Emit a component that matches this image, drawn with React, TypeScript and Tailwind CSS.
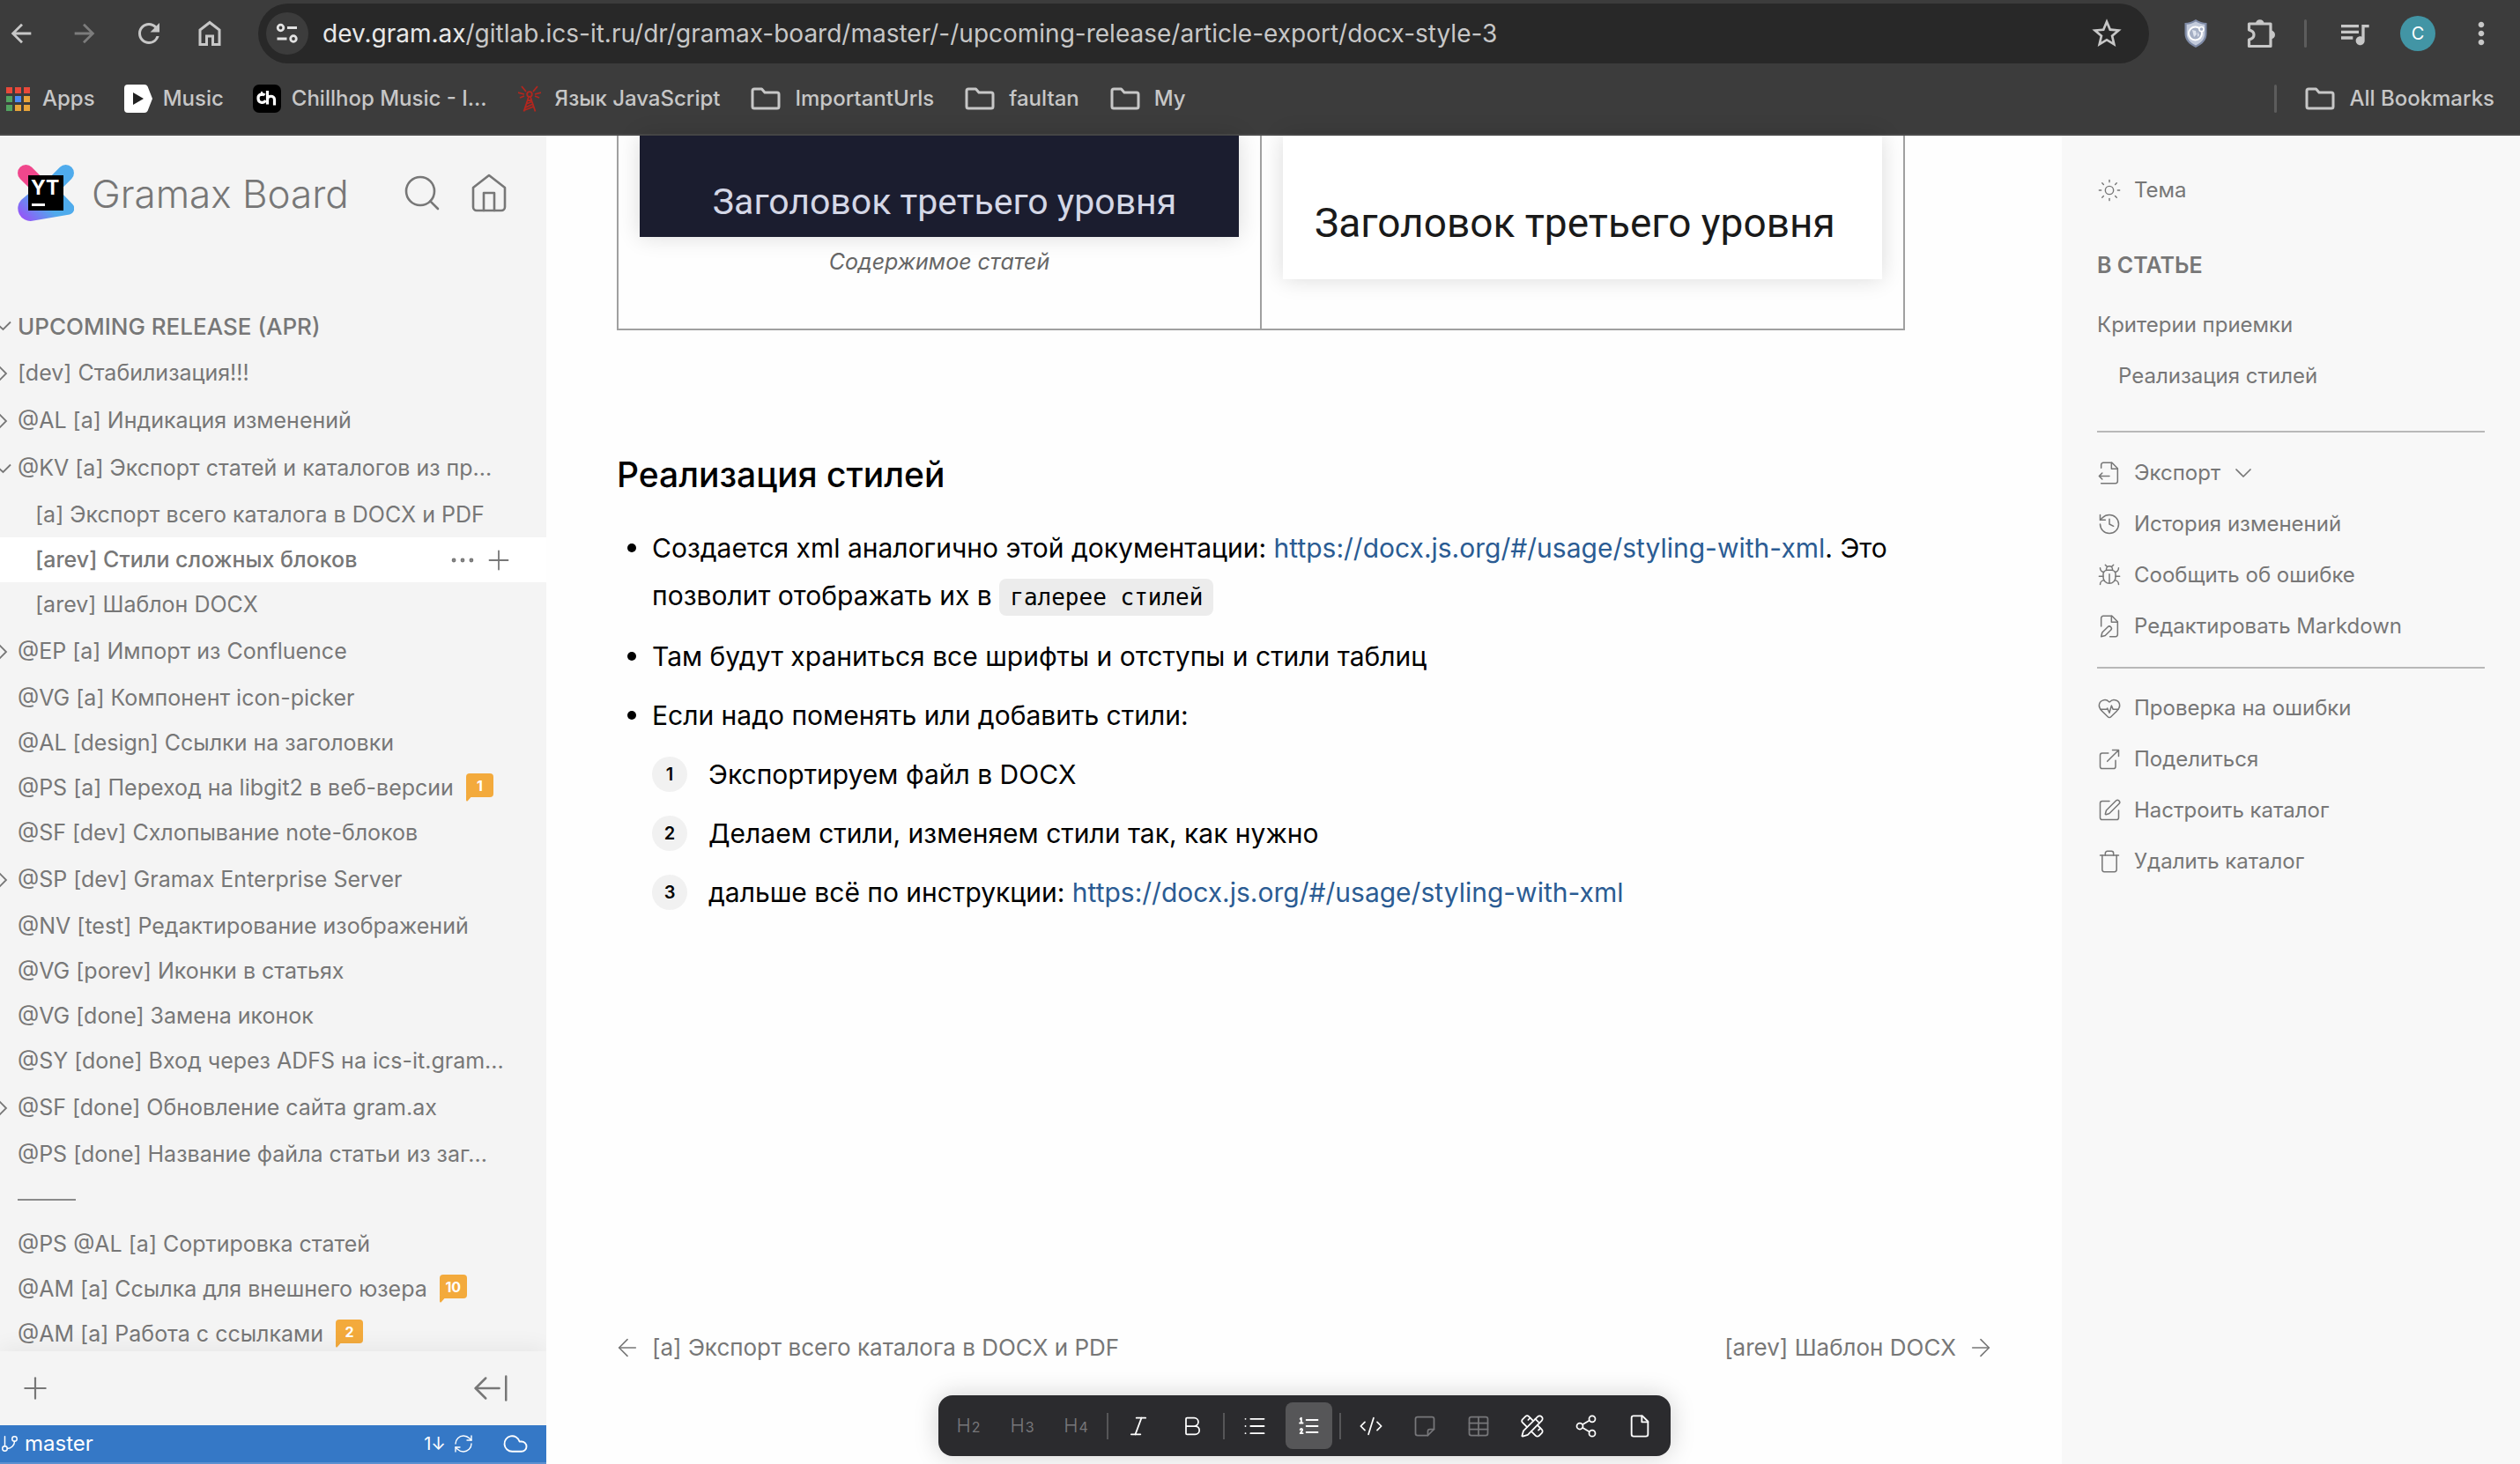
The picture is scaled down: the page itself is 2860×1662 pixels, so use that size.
import type { ReactNode } from 'react';
import {
  ArrowLeft,
  ArrowLeftFromLine,
  ArrowRight,
  Bold,
  ChevronDown,
  Cloud,
  CodeXml,
  Ellipsis,
  GitBranch,
  HeartPulse,
  History,
  Italic,
  List,
  PencilRuler,
  Plus,
  RefreshCw,
  Search,
  Share2,
  SquarePen,
  Sun,
  Table,
  Trash,
} from 'lucide-react';
import { MdArrowBack, MdArrowForward, MdMoreVert, MdQueueMusic, MdRefresh, MdStarOutline } from 'react-icons/md';

const DOCX_URL = 'https://docx.js.org/#/usage/styling-with-xml';

/* ---------- icons ---------- */

function BrowserHomeIcon() {
  return (
    <svg viewBox="0 0 26 30" className="h-[30px] w-[26px]" fill="none" stroke="currentColor" strokeWidth="3">
      <path d="M2 27.500V11L13 2.500 24 11v16.500h-7.500V18h-7v9.500z" />
    </svg>
  );
}

function TuneIcon() {
  return (
    <svg viewBox="0 0 26 24" className="h-6 w-[26px]" fill="none" stroke="currentColor" strokeWidth="2.800">
      <circle cx="5.500" cy="5.500" r="3.300" />
      <path d="M13 5.500h11M1.500 18h11" />
      <circle cx="20" cy="18" r="3.300" />
    </svg>
  );
}

function ShieldIcon() {
  return (
    <svg viewBox="0 0 26 32" className="h-8 w-[26px]">
      <path d="M13 0c4 2.600 8 3.800 12.500 4v12c0 7.500-5 12.500-12.500 16C5.500 28.500.5 23.500.5 16V4C5 3.800 9 2.600 13 0z" fill="#7f8ba6" />
      <path d="M13 2.500c3.500 2 6.500 3 10.300 3.300V16c0 6.200-4 10.500-10.300 13.500C6.700 26.500 2.700 22.200 2.700 16V5.800C6.500 5.500 9.500 4.500 13 2.500z" fill="#c3cbdb" />
      <circle cx="12.500" cy="16" r="7.500" fill="#a5afc4" stroke="#fff" strokeWidth="2" />
      <path d="M9 12l4 1 1 4-3 3zM15 14l2 4-2 2z" fill="#dfe4ee" />
      <circle cx="19.500" cy="11" r="2.600" fill="#a5afc4" stroke="#fff" strokeWidth="1.500" />
    </svg>
  );
}

function PuzzleIcon() {
  return (
    <svg viewBox="0 0 34 34" className="size-[34px]">
      <path
        d="M3.500 6h24.500v25.500H3.500v-7.500c4-1 5.500-3 5.500-5.500s-1.500-4.500-5.500-5.500z"
        fill="none"
        stroke="currentColor"
        strokeWidth="3.200"
        strokeLinejoin="round"
      />
      <path d="M11 6a4.800 4.800 0 0 1 9.600 0zM28 13.500a5 5 0 0 1 0 10z" fill="currentColor" />
    </svg>
  );
}

function FolderIcon() {
  return (
    <svg viewBox="0 0 34 26" className="mr-0.5 h-[26px] w-[34px] shrink-0" fill="none" stroke="currentColor" strokeWidth="3">
      <path d="M4 2h8.500l3.500 4h14a2 2 0 0 1 2 2v14a2 2 0 0 1-2 2H4a2 2 0 0 1-2-2V4a2 2 0 0 1 2-2z" strokeLinejoin="round" />
    </svg>
  );
}

function AppsIcon() {
  const colours = ['#e8493a', '#e8493a', '#e8493a', '#53a360', '#4a8af4', '#e8a43a', '#53a360', '#e8a43a', '#e8a43a'];
  return (
    <svg viewBox="0 0 27 27" className="size-[27px] shrink-0">
      {colours.map((c, i) => (
        <rect key={i} x={(i % 3) * 10} y={Math.floor(i / 3) * 10} width="7" height="7" fill={c} />
      ))}
    </svg>
  );
}

function MusicIcon() {
  return (
    <svg viewBox="0 0 32 32" className="-mr-0.5 -ml-0.5 size-8 shrink-0">
      <path d="M4 0h19a4 4 0 0 1 3.500 2L32 16l-5.500 14a4 4 0 0 1-3.500 2H4a4 4 0 0 1-4-4V4a4 4 0 0 1 4-4z" fill="#fff" />
      <path d="M10 9l12 7-12 7z" fill="#222" />
    </svg>
  );
}

function ChillhopIcon() {
  return (
    <svg viewBox="0 0 32 32" className="-mr-0.5 -ml-0.5 size-8 shrink-0" fill="none" stroke="#fff" strokeWidth="3.200">
      <rect width="32" height="32" rx="7" fill="#000" stroke="none" />
      <path d="M13.500 12A4.500 4.500 0 0 0 6 15.500c0 5.500 6 6.500 8.500 2.500" />
      <path d="M16.500 7v15.500M16.500 17c0-5 8-5 8 0v6.500" />
      <path d="M10 8v5" strokeWidth="2" />
    </svg>
  );
}

function TowerIcon() {
  return (
    <svg viewBox="0 0 26 30" className="mr-0.5 h-[30px] w-[26px] shrink-0" fill="none" stroke="#b3261e" strokeWidth="1.800">
      <path d="M4 1l5 6M22 1l-5 6M0 8l7 2M26 8l-7 2M2 14l5-2M24 14l-5-2" />
      <circle cx="13" cy="10" r="2.800" />
      <path d="M12 13L6.500 29.500M14 13l5.500 16.500M10 17h6M9.500 21l7-3M8.500 25l8.500-4M7.500 28l10-4" />
    </svg>
  );
}

function YouTrackLogo() {
  return (
    <svg viewBox="0 0 64 64" className="size-16 shrink-0">
      <defs>
        <linearGradient id="yt-blue" x1="0" y1="0.700" x2="0.800" y2="0.300">
          <stop offset="0" stopColor="#9358f7" />
          <stop offset="0.650" stopColor="#4fabec" />
          <stop offset="1" stopColor="#4fabec" />
        </linearGradient>
      </defs>
      <path d="M12.300 33L4 40A14.300 14.300 0 0 0 16.500 63.800L59 56.500A7 7 0 0 0 62.500 45L50 32z" fill="url(#yt-blue)" />
      <path d="M54.600 9.400L32 32" stroke="#4fabec" strokeWidth="18.700" strokeLinecap="round" />
      <path d="M9.400 9.400L30 30" stroke="#f0478c" strokeWidth="18.700" strokeLinecap="round" />
      <path d="M12 12h40v40H12z" fill="#000" />
      <path d="M16 44h15v3H16z" fill="#fff" />
      <text x="15" y="34" fill="#fff" fontFamily="Inter, sans-serif" fontWeight="700" fontSize="23">
        YT
      </text>
    </svg>
  );
}

function Outline({ className, width = 1.3, children }: { className: string; width?: number; children: ReactNode }) {
  return (
    <svg
      viewBox="0 0 24 24"
      className={className}
      fill="none"
      stroke="currentColor"
      strokeWidth={width}
      strokeLinecap="round"
      strokeLinejoin="round"
    >
      {children}
    </svg>
  );
}

/* ---------- browser chrome ---------- */

function Divider() {
  return <span className="block h-8 w-[3px] rounded-full bg-[#5c5c5c]" />;
}

function Bookmark({ icon, label }: { icon: ReactNode; label: string }) {
  return (
    <a href="#bookmark" className="flex items-center gap-3.5 whitespace-nowrap">
      {icon}
      {label}
    </a>
  );
}

function BrowserBar() {
  return (
    <header className="shrink-0 border-b-2 border-[#4a4a4a] bg-[#3c3c3c] text-[#c7c7c7]">
      <div className="flex h-[76px] items-center pr-6">
        <div className="flex w-[293px] shrink-0 items-center gap-[38px] pl-[7px]">
          <button aria-label="Back">
            <MdArrowBack className="size-[34px]" />
          </button>
          <button aria-label="Forward" className="text-[#7c7c7c]">
            <MdArrowForward className="size-[34px]" />
          </button>
          <button aria-label="Reload">
            <MdRefresh className="size-[36px]" />
          </button>
          <button aria-label="Home">
            <BrowserHomeIcon />
          </button>
        </div>
        <div className="flex h-[68px] min-w-0 flex-1 items-center rounded-full bg-[#282828] pr-7 pl-[9px]">
          <button aria-label="Site settings" className="grid size-12 place-items-center rounded-full bg-[#3c3c3c] text-[#e3e3e3]">
            <TuneIcon />
          </button>
          <p className="ml-4 flex-1 truncate text-[28px] leading-9">
            <span className="text-[#e8e8e8]">dev.gram.ax</span>
            /gitlab.ics-it.ru/dr/gramax-board/master/-/upcoming-release/article-export/docx-style-3
          </p>
          <button aria-label="Bookmark this page">
            <MdStarOutline className="size-10" />
          </button>
        </div>
        <div className="ml-10 flex items-center">
          <button aria-label="Shield extension">
            <ShieldIcon />
          </button>
          <button aria-label="Extensions" className="ml-11">
            <PuzzleIcon />
          </button>
          <span className="ml-8">
            <Divider />
          </span>
          <button aria-label="Media" className="ml-[34px]">
            <MdQueueMusic className="size-10" />
          </button>
          <button aria-label="Profile" className="ml-8 grid size-10 place-items-center rounded-full bg-[#4295a5] text-xl text-white">
            C
          </button>
          <button aria-label="Menu" className="ml-8">
            <MdMoreVert className="size-10" />
          </button>
        </div>
      </div>
      <nav className="flex h-[76px] items-center gap-[35px] pr-[29px] pb-1 pl-[7px] text-2xl font-medium">
        <Bookmark icon={<AppsIcon />} label="Apps" />
        <Bookmark icon={<MusicIcon />} label="Music" />
        <Bookmark icon={<ChillhopIcon />} label="Chillhop Music - I..." />
        <Bookmark icon={<TowerIcon />} label="Язык JavaScript" />
        <Bookmark icon={<FolderIcon />} label="ImportantUrls" />
        <Bookmark icon={<FolderIcon />} label="faultan" />
        <Bookmark icon={<FolderIcon />} label="My" />
        <div className="ml-auto flex items-center gap-8">
          <Divider />
          <Bookmark icon={<FolderIcon />} label="All Bookmarks" />
        </div>
      </nav>
    </header>
  );
}

/* ---------- catalog sidebar ---------- */

type Row = {
  label: string;
  kind?: 'heading' | 'open' | 'closed' | 'child' | 'active' | 'rule';
  comments?: number;
};

const topRows: Row[] = [
  { label: 'UPCOMING RELEASE (APR)', kind: 'heading' },
  { label: '[dev] Стабилизация!!!', kind: 'closed' },
  { label: '@AL [a] Индикация изменений', kind: 'closed' },
  { label: '@KV [a] Экспорт статей и каталогов из пр...', kind: 'open' },
];

const rows: Row[] = [
  { label: '[a] Экспорт всего каталога в DOCX и PDF', kind: 'child' },
  { label: '[arev] Стили сложных блоков', kind: 'active' },
  { label: '[arev] Шаблон DOCX', kind: 'child' },
  { label: '@EP [a] Импорт из Confluence', kind: 'closed' },
  { label: '@VG [a] Компонент icon-picker' },
  { label: '@AL [design] Ссылки на заголовки' },
  { label: '@PS [a] Переход на libgit2 в веб-версии', comments: 1 },
  { label: '@SF [dev] Схлопывание note-блоков' },
  { label: '@SP [dev] Gramax Enterprise Server', kind: 'closed' },
  { label: '@NV [test] Редактирование изображений' },
  { label: '@VG [porev] Иконки в статьях' },
  { label: '@VG [done] Замена иконок' },
  { label: '@SY [done] Вход через ADFS на ics-it.gram...' },
  { label: '@SF [done] Обновление сайта gram.ax', kind: 'closed' },
  { label: '@PS [done] Название файла статьи из заг...' },
  { label: '', kind: 'rule' },
  { label: '@PS @AL [a] Сортировка статей' },
  { label: '@AM [a] Ссылка для внешнего юзера', comments: 10 },
  { label: '@AM [a] Работа с ссылками', comments: 2 },
];

function CommentBadge({ count }: { count: number }) {
  return (
    <span className="relative mb-1.5 grid h-[27px] w-[31px] place-items-center rounded bg-[#f3aa3c] text-base font-bold text-white">
      {count}
      <svg viewBox="0 0 8 8" className="absolute top-[24px] left-0 size-2" fill="#f3aa3c">
        <path d="M0 0h8L1.500 7.500Q0 8 0 6z" />
      </svg>
    </span>
  );
}

function TreeMarker({ kind }: { kind: Row['kind'] }) {
  if (kind === 'closed') {
    return (
      <svg viewBox="0 0 10 18" className="absolute left-0 h-[18px] w-2.5" fill="none" stroke="currentColor" strokeWidth="1.800">
        <path d="M-1 1l8 8-8 8" />
      </svg>
    );
  }
  if (kind === 'open' || kind === 'heading') {
    return (
      <svg viewBox="0 0 14 12" className="absolute left-0 h-3 w-3.5" fill="none" stroke="currentColor" strokeWidth="1.800">
        <path d="M-4 3l7.500 7L12 1.500" />
      </svg>
    );
  }
  return null;
}

function TreeRow({ row, parentHeight }: { row: Row; parentHeight: string }) {
  const { kind } = row;
  const isParent = kind === 'heading' || kind === 'open' || kind === 'closed';
  const nested = kind === 'child' || kind === 'active';
  return (
    <li
      className={`relative flex items-center pr-9 ${isParent ? parentHeight : 'h-[51px]'} ${nested ? 'pl-10' : 'pl-5'} ${
        kind === 'active' ? 'bg-white' : ''
      }`}
    >
      <TreeMarker kind={kind} />
      {kind === 'rule' ? (
        <hr className="w-[66px] border-t-2 border-[#8a8a8a]" />
      ) : (
        <a
          href="#article"
          className={`whitespace-nowrap ${kind === 'heading' ? 'text-[26px] font-medium' : ''} ${
            kind === 'active' ? 'font-medium' : ''
          }`}
        >
          {row.label}
        </a>
      )}
      {row.comments !== undefined && (
        <span className="ml-3.5">
          <CommentBadge count={row.comments} />
        </span>
      )}
      {kind === 'active' && (
        <span className="ml-auto flex items-center gap-1.5">
          <button aria-label="Article actions">
            <Ellipsis className="size-[34px]" strokeWidth={1.4} />
          </button>
          <button aria-label="Add article">
            <Plus className="size-9" strokeWidth={1.2} />
          </button>
        </span>
      )}
    </li>
  );
}

function Sidebar() {
  return (
    <aside className="flex w-[620px] shrink-0 flex-col bg-[#f4f4f4] text-[25px] text-[#777]">
      <div className="flex h-[189px] shrink-0 items-start px-5 pt-[33px]">
        <YouTrackLogo />
        <h1 className="ml-5 text-[44px] leading-[66px] font-light whitespace-nowrap">Gramax Board</h1>
        <div className="ml-auto flex h-[64px] items-center gap-7 pr-[21px]">
          <button aria-label="Search">
            <Search className="size-12" strokeWidth={1.3} />
          </button>
          <button aria-label="Home">
            <Outline className="size-12">
              <path d="m3 9 9-7 9 7v11a2 2 0 0 1-2 2H5a2 2 0 0 1-2-2z" />
              <path d="M9 22V12h6v10" />
            </Outline>
          </button>
        </div>
      </div>
      <nav className="min-h-0 flex-1 overflow-hidden">
        <ul>
          {topRows.map((row) => (
            <TreeRow key={row.label} row={row} parentHeight="h-[54px]" />
          ))}
          {rows.map((row) => (
            <TreeRow key={row.label} row={row} parentHeight="h-[55px]" />
          ))}
        </ul>
      </nav>
      <div className="relative flex h-[84px] shrink-0 items-center justify-between bg-[#f4f4f4] pr-10 pl-5 shadow-[0_-4px_24px_rgba(0,0,0,0.060)]">
        <button aria-label="Add article">
          <Plus className="size-10" strokeWidth={1.3} />
        </button>
        <button aria-label="Collapse sidebar">
          <ArrowLeftFromLine className="size-[46px]" strokeWidth={1.3} />
        </button>
      </div>
      <div className="relative flex h-11 shrink-0 items-center border-b-2 border-[#5b90d1] bg-[#3578c6] pr-5 text-2xl text-white">
        <button className="flex items-center gap-1.5">
          <GitBranch className="size-[22px]" strokeWidth={1.6} />
          master
        </button>
        <button className="ml-auto flex items-center text-xl">
          1↓
          <RefreshCw className="ml-2 size-6" strokeWidth={1.4} />
        </button>
        <button aria-label="Storage" className="ml-8">
          <Cloud className="size-[30px]" strokeWidth={1.5} />
        </button>
      </div>
    </aside>
  );
}

/* ---------- article ---------- */

function PreviewTable() {
  return (
    <table className="w-full table-fixed border-collapse">
      <tbody>
        <tr>
          <td className="border-2 border-t-0 border-[#a0a0a0] px-6 pb-14 align-top">
            <figure>
              <div className="flex h-[115px] items-end justify-center bg-[#1b1d2f] pb-3 pl-3 text-[#d4d7e6] shadow-[0_0_24px_rgba(0,0,0,0.140)]">
                <span className="font-['Roboto'] text-[41px] leading-[56px]">Заголовок третьего уровня</span>
              </div>
              <figcaption className="mt-2.5 text-center text-[25px] leading-9 text-[#666] italic">Содержимое статей</figcaption>
            </figure>
          </td>
          <td className="border-2 border-t-0 border-[#a0a0a0] px-6 pb-14 align-top">
            <div className="flex h-[163px] items-end bg-white pb-9 pl-9 text-[#1a1a1a] shadow-[0_0_24px_rgba(0,0,0,0.140)]">
              <span className="font-['Roboto'] text-[46px] leading-[56px]">Заголовок третьего уровня</span>
            </div>
          </td>
        </tr>
      </tbody>
    </table>
  );
}

function Bullet({ children }: { children: ReactNode }) {
  return (
    <li className="flex gap-[18px]">
      <span className="mt-[22px] ml-3 size-2.5 shrink-0 rounded-full bg-black" />
      <div className="min-w-0 flex-1">{children}</div>
    </li>
  );
}

function Step({ n, children }: { n: number; children: ReactNode }) {
  return (
    <li className="flex items-center gap-6">
      <span className="grid size-10 place-items-center rounded-full bg-[#f1f1f1] text-xl font-semibold">{n}</span>
      <span>{children}</span>
    </li>
  );
}

function DocLink() {
  return (
    <a href={DOCX_URL} className="text-[#2b5c93]">
      {DOCX_URL}
    </a>
  );
}

function ToolButton({ label, muted, active, children }: { label: string; muted?: boolean; active?: boolean; children: ReactNode }) {
  return (
    <button
      aria-label={label}
      className={`grid h-[53px] w-[53px] place-items-center rounded-lg ${muted ? 'text-[#77777a]' : 'text-white'} ${
        active ? 'bg-[#565658]' : ''
      }`}
    >
      {children}
    </button>
  );
}

function HeadingGlyph({ level }: { level: number }) {
  return (
    <span className="flex items-baseline gap-px text-[22px] leading-6 font-light">
      H<span className="text-base font-normal">{level}</span>
    </span>
  );
}

function ToolDivider() {
  return <span className="h-[30px] w-0.5 bg-[#565658]" />;
}

function EditorToolbar() {
  return (
    <div
      role="toolbar"
      aria-label="Editor"
      className="flex h-[69px] items-center gap-2 rounded-2xl bg-[#2b2b2e] px-2 shadow-[0_0_28px_rgba(0,0,0,0.180)]"
    >
      {[2, 3, 4].map((level) => (
        <ToolButton key={level} label={`Heading ${level}`} muted>
          <HeadingGlyph level={level} />
        </ToolButton>
      ))}
      <ToolDivider />
      <ToolButton label="Italic">
        <Italic className="size-7" strokeWidth={1.5} />
      </ToolButton>
      <ToolButton label="Bold">
        <Bold className="size-7" strokeWidth={1.5} />
      </ToolButton>
      <ToolDivider />
      <ToolButton label="Bullet list">
        <List className="size-7" strokeWidth={1.6} />
      </ToolButton>
      <ToolButton label="Numbered list" active>
        <Outline className="size-7" width={1.6}>
          <path d="M10 6h11M10 12h11M10 18h11M4 5l1-1v5M3.500 9h3M4 15.500c.5-1.500 2.500-1 2 .5L4 19h2.500" />
        </Outline>
      </ToolButton>
      <ToolDivider />
      <ToolButton label="Code">
        <CodeXml className="size-7" strokeWidth={1.5} />
      </ToolButton>
      <ToolButton label="Note" muted>
        <Outline className="size-7" width={1.5}>
          <path d="M15 21H5a2 2 0 0 1-2-2V5a2 2 0 0 1 2-2h14a2 2 0 0 1 2 2v10z" />
          <path d="M15 21v-4a2 2 0 0 1 2-2h4" />
        </Outline>
      </ToolButton>
      <ToolButton label="Table" muted>
        <Table className="size-7" strokeWidth={1.5} />
      </ToolButton>
      <ToolButton label="Diagram">
        <PencilRuler className="size-7" strokeWidth={1.5} />
      </ToolButton>
      <ToolButton label="Share">
        <Share2 className="size-7" strokeWidth={1.5} />
      </ToolButton>
      <ToolButton label="File">
        <Outline className="size-7" width={1.6}>
          <path d="M14.500 2H6a2 2 0 0 0-2 2v16a2 2 0 0 0 2 2h12a2 2 0 0 0 2-2V7.500z" />
          <path d="M14 2v6h6" />
        </Outline>
      </ToolButton>
    </div>
  );
}

function Article() {
  return (
    <main className="relative flex min-w-0 flex-1 flex-col bg-[#fefefe] px-20 text-[30px] leading-[54px] text-black">
      <div className="pr-[98px]">
        <PreviewTable />
        <h2 className="mt-[136px] text-[39px] leading-[56px] font-medium">Реализация стилей</h2>
        <ul className="mt-7 flex flex-col gap-[13px]">
          <Bullet>
            Создается xml аналогично этой документации: <DocLink />. Это позволит отображать их в{' '}
            <code className="rounded-lg bg-[#ececec] px-3 py-1.5 font-['DejaVu_Sans_Mono',monospace] text-[26px]">галерее стилей</code>
          </Bullet>
          <Bullet>Там будут храниться все шрифты и отступы и стили таблиц</Bullet>
          <Bullet>
            Если надо поменять или добавить стили:
            <ol className="mt-[13px] flex flex-col gap-[13px]">
              <Step n={1}>Экспортируем файл в DOCX</Step>
              <Step n={2}>Делаем стили, изменяем стили так, как нужно</Step>
              <Step n={3}>
                дальше всё по инструкции: <DocLink />
              </Step>
            </ol>
          </Bullet>
        </ul>
      </div>
      <nav className="mt-auto -mr-1 mb-[27px] -ml-1 flex justify-between text-[26px] text-[#777]">
        <a href="#prev" className="flex items-center gap-3">
          <ArrowLeft className="size-8" strokeWidth={1.2} />
          [a] Экспорт всего каталога в DOCX и PDF
        </a>
        <a href="#next" className="flex items-center gap-3">
          [arev] Шаблон DOCX
          <ArrowRight className="size-8" strokeWidth={1.2} />
        </a>
      </nav>
      <div className="mb-[9px] flex justify-center">
        <EditorToolbar />
      </div>
    </main>
  );
}

/* ---------- right panel ---------- */

function Action({ icon, label, children }: { icon: ReactNode; label: string; children?: ReactNode }) {
  return (
    <li>
      <button className="flex h-[58px] items-center gap-3.5 whitespace-nowrap">
        {icon}
        {label}
        {children}
      </button>
    </li>
  );
}

const actionIcon = 'size-7';

function RightPanel() {
  return (
    <aside className="w-[520px] shrink-0 bg-[#f8f8f8] px-10 pt-[33px] text-2xl text-[#777]">
      <ul>
        <Action icon={<Sun className={actionIcon} strokeWidth={1.2} />} label="Тема" />
      </ul>
      <h3 className="mt-9 text-[25px] leading-[40px] font-semibold">В СТАТЬЕ</h3>
      <ul className="mt-[19px]">
        <li className="flex h-[58px] items-center">
          <a href="#criteria">Критерии приемки</a>
        </li>
        <li className="flex h-[58px] items-center pl-6">
          <a href="#styles">Реализация стилей</a>
        </li>
      </ul>
      <hr className="mt-[33px] border-t-2 border-[#b8b8b8]" />
      <ul className="mt-[17px]">
        <Action
          icon={
            <Outline className={actionIcon}>
              <path d="M4 7V4a2 2 0 0 1 2-2h8.500L20 7.500V20a2 2 0 0 1-2 2H4" />
              <path d="M14 2v6h6M2 15h10M5 12l-3 3 3 3" />
            </Outline>
          }
          label="Экспорт"
        >
          <ChevronDown className="-ml-1 size-8" strokeWidth={1.3} />
        </Action>
        <Action icon={<History className={actionIcon} strokeWidth={1.3} />} label="История изменений" />
        <Action
          icon={
            <Outline className={actionIcon}>
              <path d="m8 2 1.880 1.880M14.120 3.880 16 2M9 7.130v-1a3 3 0 1 1 6 0v1" />
              <path d="M12 20c-3.300 0-6-2.700-6-6v-3a4 4 0 0 1 4-4h4a4 4 0 0 1 4 4v3c0 3.300-2.700 6-6 6M12 20v-9" />
              <path d="M6.530 9C4.600 8.800 3 7.100 3 5M6 13H2M3 21c0-2.100 1.700-3.900 3.800-4M20.970 5c0 2.100-1.600 3.800-3.500 4M22 13h-4M17.200 17c2.100.1 3.800 1.900 3.800 4" />
            </Outline>
          }
          label="Сообщить об ошибке"
        />
        <Action
          icon={
            <Outline className={actionIcon}>
              <path d="M4 12V4a2 2 0 0 1 2-2h8.500L20 7.500V20a2 2 0 0 1-2 2h-5.500" />
              <path d="M14 2v6h6M10.420 12.610a2.100 2.100 0 1 1 2.970 2.970L7.950 21 4 22l.99-3.950z" />
            </Outline>
          }
          label="Редактировать Markdown"
        />
      </ul>
      <hr className="mt-[17px] border-t-2 border-[#b8b8b8]" />
      <ul className="mt-4">
        <Action icon={<HeartPulse className={actionIcon} strokeWidth={1.3} />} label="Проверка на ошибки" />
        <Action
          icon={
            <Outline className={actionIcon}>
              <path d="M15 3h6v6M10 14 21 3M18 13v6a2 2 0 0 1-2 2H5a2 2 0 0 1-2-2V8a2 2 0 0 1 2-2h6" />
            </Outline>
          }
          label="Поделиться"
        />
        <Action icon={<SquarePen className={actionIcon} strokeWidth={1.3} />} label="Настроить каталог" />
        <Action icon={<Trash className={actionIcon} strokeWidth={1.3} />} label="Удалить каталог" />
      </ul>
    </aside>
  );
}

export default function App() {
  return (
    <div className="flex h-screen flex-col overflow-hidden font-['Inter',sans-serif]">
      <BrowserBar />
      <div className="flex min-h-0 flex-1">
        <Sidebar />
        <Article />
        <RightPanel />
      </div>
    </div>
  );
}
